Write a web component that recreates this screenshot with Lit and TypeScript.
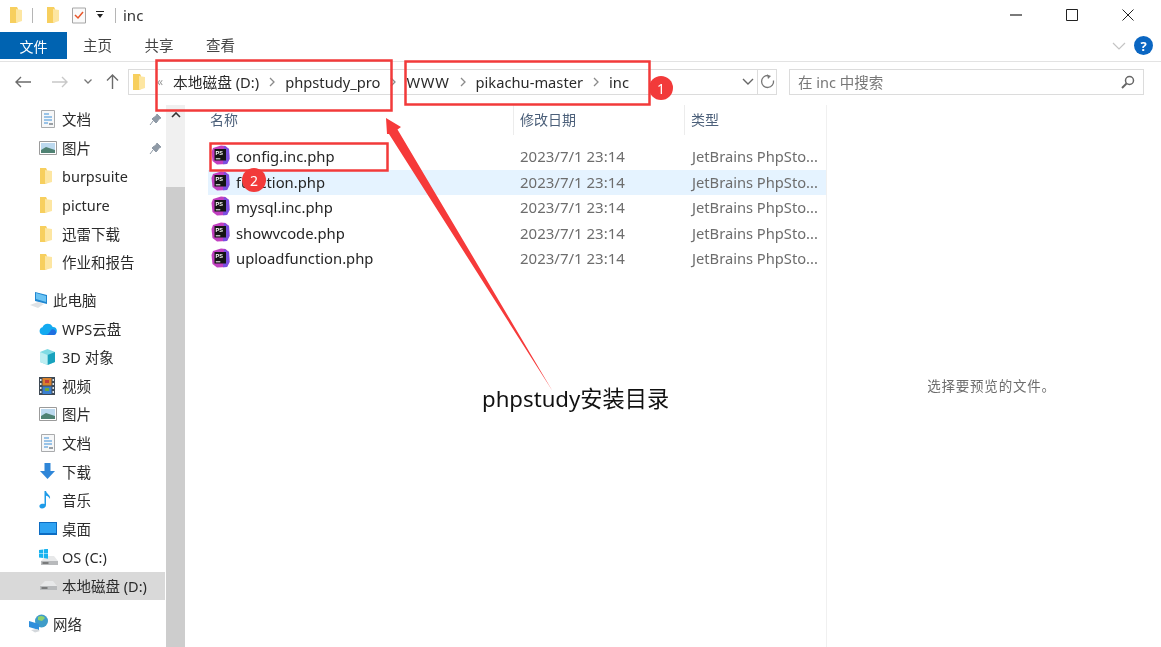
import { LitElement, html, css, svg } from "lit";
import { customElement } from "lit/decorators.js";

const folder = svg`<svg class="ic" width="16" height="18" viewBox="0 0 16 18"><path d="M1 1h7l1 2v12l-1 2H1z" fill="#f7cf5e"/><path d="M7 3l6 1v11l-6 2z" fill="#fde6a2"/></svg>`;
const sideFolder = svg`<svg width="16" height="18" viewBox="0 0 16 18"><path d="M1 1h6l1 2v12l-1 2H1z" fill="#f7cf5e"/><path d="M6 3l7 1v11l-7 2z" fill="#fde6a2"/></svg>`;
const doc = svg`<svg width="18" height="20" viewBox="0 0 18 20"><path d="M2.500 1.500h13v17h-13z" fill="#f6f7f8" stroke="#a9abad"/><path d="M5 5h5M5 8h8M5 11h8M5 14h4" stroke="#3d8fd6" fill="none"/><path d="M10 14h4v2h-4z" fill="#9aa0a5"/></svg>`;
const pic = svg`<svg width="18" height="14" viewBox="0 0 18 14"><path d="M.5.5h17v13H.5z" fill="#fff" stroke="#9b9b9b"/><path d="M2 2h14v10H2z" fill="#bcd9ef"/><path d="M2 9l5-3 9 3v3H2z" fill="#4f8273"/></svg>`;
const pin = svg`<svg width="13" height="13" viewBox="0 0 13 13"><path d="M8 1l4 4-2 1-2 3-1 1-4-4 1-1 3-2zM4 8l-3 4" fill="#8f9aa6" stroke="#8f9aa6"/></svg>`;
const pc = svg`<svg width="20" height="20" viewBox="0 0 20 20"><path d="M1 15l8-3 6 2-6 4z" fill="#dfe2e5"/><path d="M6 2l12 3v9l-12-3z" fill="#1f86d0"/><path d="M7 3l10 3v6L7 9z" fill="#6cc4f4"/></svg>`;
const cloud = svg`<svg width="18" height="14" viewBox="0 0 18 14"><path d="M4 13a4 4 0 0 1-.5-7.800A5.500 5.500 0 0 1 13.700 5 4 4 0 0 1 14 13z" fill="#13aaf0"/><path d="M6 13c3 0 5-3 6-5 2-1.700 5 0 5 2.500S15.500 13 14 13z" fill="#1f6fe0"/></svg>`;
const cube = svg`<svg width="17" height="18" viewBox="0 0 17 18"><path d="M8.500 1L16 4v10l-7.500 3L1 14V4z" fill="#7fdbe4"/><path d="M8.500 7L16 4v10l-7.500 3z" fill="#18a2bd"/><path d="M1 4l7.500 3v10L1 14z" fill="#bdeef2"/></svg>`;
const film = svg`<svg width="16" height="18" viewBox="0 0 16 18"><path d="M0 0h16v18H0z" fill="#3f4a55"/><path d="M3.500 1h9v7.500h-9z" fill="#d9812d"/><path d="M3.500 9.500h9V17h-9z" fill="#3a7fd0"/><path d="M6 3h4v3H6z" fill="#c13d3d"/><path d="M6 11h4v3H6z" fill="#6da542"/><path d="M1 2h1.500v2H1zM1 6h1.500v2H1zM1 10h1.500v2H1zM1 14h1.500v2H1zM13.500 2H15v2h-1.500zM13.500 6H15v2h-1.500zM13.500 10H15v2h-1.500zM13.500 14H15v2h-1.500z" fill="#dfe6ec"/></svg>`;
const down = svg`<svg width="17" height="17" viewBox="0 0 17 17"><path d="M5.500 0h6v8H16l-7.500 8L1 8h4.500z" fill="#2f86d8"/></svg>`;
const music = svg`<svg width="13" height="18" viewBox="0 0 13 18"><path d="M5.500 0h1.500c.5 3 5 4 4 8-.8-2-2.500-3-4-3.300V14c0 2-2 3.500-4 3.500S0 16 .5 14.500s3-2.200 5-1.500z" fill="#1e9be8"/></svg>`;
const desk = svg`<svg width="18" height="13" viewBox="0 0 18 13"><path d="M0 0h18v13H0z" fill="#0d6cc2"/><path d="M1 1h16v10H1z" fill="#2fa3f2"/></svg>`;
const disk = svg`<svg width="19" height="11" viewBox="0 0 19 11"><path d="M1 6l5-5h8l4 5z" fill="#e7e8e9"/><path d="M1 6h17v4H1z" fill="#b8babc"/><path d="M2.500 7.500h6v1h-6z" fill="#3a3a3a"/></svg>`;
const cDisk = svg`<svg width="20" height="17" viewBox="0 0 20 17"><path d="M2 12l5-5h8l4 5z" fill="#e7e8e9"/><path d="M2 12h17v4H2z" fill="#b8babc"/><path d="M3.500 13.500h6v1h-6z" fill="#3a3a3a"/><path d="M0 1l4-.6v4H0zM4.700.3L9-.3v4.700H4.700zM0 5h4v4L0 8.500zM4.700 5H9v4.700L4.700 9.100z" fill="#19b3ef"/></svg>`;
const net = svg`<svg width="20" height="19" viewBox="0 0 20 19"><circle cx="12.500" cy="7" r="6.500" fill="#3f9cc9"/><path d="M9 3c3-2 6-1 7 1l-3 3-4-1z" fill="#8ed16f"/><path d="M0 7l10 3v6L0 13z" fill="#2f8fdc"/><path d="M2 16l6-1 3 2-5 1.500z" fill="#d4d8dc"/></svg>`;
const ps = svg`<svg class="ps" width="19" height="20" viewBox="0 0 19 20"><path d="M2 3 10 .5 14.500 1 18 4l.5 10-2.500 5-10 .5L1.500 16 .5 7z" fill="#c13fc0"/><path d="M13 .7 18 4l.5 10-2.500 5-4 .3z" fill="#7a4fe0"/><path d="M3.500 4h11.500v11.500H3.500z" fill="#141414"/><text x="4.600" y="9.800" class="pst">PS</text><path d="M4.800 13.300h4.500v1H4.800z" fill="#fff"/></svg>`;

const quick = [
  [doc, "文档", true], [pic, "图片", true], [sideFolder, "burpsuite", false],
  [sideFolder, "picture", false], [sideFolder, "迅雷下载", false], [sideFolder, "作业和报告", false],
] as const;
const pcItems = [
  [cloud, "WPS云盘"], [cube, "3D 对象"], [film, "视频"], [pic, "图片"], [doc, "文档"],
  [down, "下载"], [music, "音乐"], [desk, "桌面"], [cDisk, "OS (C:)"],
] as const;
const files = ["config.inc.php", "function.php", "mysql.inc.php", "showvcode.php", "uploadfunction.php"];
const crumbs = ["本地磁盘 (D:)", "phpstudy_pro", "WWW", "pikachu-master", "inc"];

@customElement("app-root")
export class AppRoot extends LitElement {
  static styles = css`
    :host {
      display: block; position: relative; width: 1161px; height: 647px; overflow: hidden; background: #fff;
      font-family: "Noto Sans", "Noto Sans CJK SC", sans-serif; font-size: 14.5px; color: #2b2b2b;
      filter: blur(0.35px);
    }
    svg { display: block; flex: none; }
    .title { height: 30px; display: flex; align-items: center; padding-left: 9px; margin-bottom: 2px; }
    .title .sep { width: 1px; height: 15px; background: #b5b5b5; }
    .s1 { margin: 0 13px 0 7px; }
    .s2 { margin: 0 7px 0 11px; }
    .chk { margin-left: 9px; }
    .drop { margin-left: 9px; }
    .tname { font-size: 15px; color: #333; }
    .win { margin-left: auto; margin-right: 5px; display: flex; }
    .win div { width: 56px; height: 28px; display: grid; place-items: center; }
    .ribbon { height: 29px; display: flex; align-items: flex-start; border-bottom: 1px solid #e3e3e3; }
    .file { width: 67px; height: 27px; background: #0063b1; color: #fff; display: grid; place-items: center; font-size: 14px; }
    .tab { font-size: 14.500px; color: #444; line-height: 27px; margin-left: 16px; margin-right: 16.500px; }
    .rib-right { margin-left: auto; margin-right: 8px; display: flex; align-items: center; gap: 8px; height: 27px; }
    .help { width: 19px; height: 19px; border-radius: 50%; background: #0a66c2; color: #fff; font-size: 13px; font-weight: 700; display: grid; place-items: center; }
    .nav { height: 43px; display: flex; align-items: center; padding-bottom: 4px; box-sizing: border-box; }
    .navb { display: flex; align-items: center; width: 128px; flex: none; padding-left: 15px; box-sizing: border-box; }
    .address { width: 629px; height: 26px; box-sizing: border-box; border: 1px solid #dcdcdc; border-right: 0; display: flex; align-items: center; padding-left: 3px; flex: none; }
    .address .ic { margin-right: 9px; }
    .dbl { color: #9a9a9a; font-size: 12px; margin-right: 10px; }
    .crumb { color: #2b2b2b; white-space: nowrap; font-size: 14.700px; }
    .crumb.w2 { letter-spacing: 0.700px; }
    .gt { margin: 0 10px; flex: none; }
    .addr-drop { margin-left: auto; margin-right: 3px; }
    .refresh { width: 20px; height: 26px; box-sizing: border-box; border: 1px solid #dcdcdc; display: grid; place-items: center; flex: none; }
    .search { margin-left: 12px; width: 355px; height: 26px; box-sizing: border-box; border: 1px solid #dcdcdc; display: flex; align-items: center; padding: 0 8px; color: #777; font-size: 14.500px; flex: none; justify-content: space-between; }
    .main { display: flex; height: 542px; }
    .side { width: 166px; flex: none; display: flex; flex-direction: column; }
    .row { height: 28.600px; display: flex; align-items: center; position: relative; white-space: nowrap; flex: none; }
    .row .icon { width: 62px; padding-left: 39px; box-sizing: border-box; flex: none; display: flex; justify-content: flex-start; }
    .row.top .icon { width: 53px; padding-left: 29px; }
    .row .txt { position: relative; top: -0.500px; }
    .row.sel { background: #d9d9d9; margin-right: 1px; }
    .row .pin { position: absolute; left: 149px; top: 8px; }
    .gap { height: 9.100px; flex: none; }
    .scroll { width: 19px; flex: none; display: flex; flex-direction: column; }
    .sup { height: 82px; background: #f0f0f0; display: flex; justify-content: center; padding-top: 7px; box-sizing: border-box; }
    .thumb { flex: 1; background: #cdcdcd; }
    .list { width: 642px; flex: none; border-right: 1px solid #f0f0f0; padding-left: 23px; box-sizing: border-box; }
    .head { display: grid; grid-template-columns: 305px 171px 1fr; height: 30px; align-items: center; color: #4c607a; font-size: 14px; }
    .head div { height: 30px; line-height: 30px; padding-left: 6px; border-left: 1px solid #ececec; }
    .head div:first-child { padding-left: 2px; border-left: 0; }
    .rows { padding-top: 9px; }
    .frow { display: grid; grid-template-columns: 305px 171px 1fr; height: 25.600px; line-height: 25.600px; align-items: start; color: #6d6d6d; white-space: nowrap; font-size: 14.700px; }
    .frow.hot { background: #e5f3ff; }
    .frow .n { display: flex; align-items: center; gap: 6px; color: #262626; padding-left: 3px; font-size: 14.800px; }
    .frow .d { padding-left: 7px; font-size: 15px; }
    .frow .t { padding-left: 8px; }
    .ps { margin-top: -3px; }
    .pst { font: 700 5.500px "Liberation Sans", sans-serif; fill: #fff; }
    .preview { flex: 1; display: flex; justify-content: center; padding-top: 270px; padding-right: 5px; box-sizing: border-box; color: #6d6d6d; font-size: 13.500px; letter-spacing: 0.800px; }
    .anno { position: absolute; left: 0; top: 0; pointer-events: none; }
    .label { position: absolute; left: 482px; top: 381px; font-size: 22.200px; line-height: 36px; color: #111; white-space: nowrap; }
    .badge { position: absolute; width: 24px; height: 24px; border-radius: 50%; background: #f23a3a; color: #fff; display: grid; place-items: center; font-size: 14px; }
    .b1 { left: 649px; top: 76px; }
    .b2 { left: 242px; top: 168px; }
  `;

  private chevron() {
    return svg`<svg class="gt" width="6" height="10" viewBox="0 0 6 10"><path d="M1 1l4 4-4 4" fill="none" stroke="#8a8a8a" stroke-width="1.300"/></svg>`;
  }

  render() {
    return html`
      <div class="title">
        ${folder}<div class="sep s1"></div>${folder}
        <svg class="chk" width="16" height="17" viewBox="0 0 16 17"><path d="M1.500 1h13v15h-13z" fill="#fafafa" stroke="#a6a6a6"/><path d="M4 8l3 3 5-6" fill="none" stroke="#e8562a" stroke-width="1.500"/></svg>
        <svg class="drop" width="8" height="8" viewBox="0 0 8 8"><path d="M0 0h8v1H0z" fill="#222"/><path d="M1 3h6L4 7z" fill="#222"/></svg>
        <div class="sep s2"></div><span class="tname">inc</span>
        <div class="win">
          <div><svg width="12" height="2" viewBox="0 0 12 2"><path d="M0 1h12" stroke="#222" stroke-width="1.200"/></svg></div>
          <div><svg width="12" height="12" viewBox="0 0 12 12"><path d="M.5.5h11v11H.5z" fill="none" stroke="#222"/></svg></div>
          <div><svg width="12" height="12" viewBox="0 0 12 12"><path d="M.5.500l11 11M11.500.500l-11 11" fill="none" stroke="#222"/></svg></div>
        </div>
      </div>
      <div class="ribbon">
        <div class="file">文件</div>
        <span class="tab">主页</span><span class="tab">共享</span><span class="tab">查看</span>
        <div class="rib-right">
          <svg width="14" height="8" viewBox="0 0 14 8"><path d="M1 1l6 6 6-6" fill="none" stroke="#c4c4c4" stroke-width="1.200"/></svg>
          <div class="help">?</div>
        </div>
      </div>
      <div class="nav">
        <div class="navb">
          <svg width="16" height="12" viewBox="0 0 16 12"><path d="M16 6H1M6 1L1 6l5 5" fill="none" stroke="#6b6b6b" stroke-width="1.400"/></svg>
          <svg style="margin-left:21px" width="16" height="12" viewBox="0 0 16 12"><path d="M0 6h15M10 1l5 5-5 5" fill="none" stroke="#c8c8c8" stroke-width="1.400"/></svg>
          <svg style="margin-left:16px" width="8" height="5" viewBox="0 0 8 5"><path d="M.5.500L4 4 7.500.500" fill="none" stroke="#777" stroke-width="1.300"/></svg>
          <svg style="margin-left:14px" width="13" height="15" viewBox="0 0 13 15"><path d="M6.500 15V1M1 6.500l5.500-5.500 5.500 5.500" fill="none" stroke="#6b6b6b" stroke-width="1.400"/></svg>
        </div>
        <div class="address">
          ${folder}<span class="dbl">«</span>
          ${crumbs.map((c, i) => html`<span class="crumb ${i === 2 ? "w2" : ""}">${c}</span>${i < crumbs.length - 1 ? this.chevron() : ""}`)}
          <svg class="addr-drop" width="12" height="7" viewBox="0 0 12 7"><path d="M1 1l5 5 5-5" fill="none" stroke="#666" stroke-width="1.400"/></svg>
        </div>
        <div class="refresh"><svg width="15" height="15" viewBox="0 0 15 15"><path d="M8 1.500a6 6 0 1 0 5.500 5" fill="none" stroke="#777" stroke-width="1.300"/><path d="M7 .500L11 2 8 5z" fill="#777"/></svg></div>
        <div class="search"><span>在 inc 中搜索</span>
          <svg width="14" height="14" viewBox="0 0 14 14"><circle cx="8.500" cy="5.500" r="4" fill="none" stroke="#666" stroke-width="1.500"/><path d="M5.500 8.500L1 13" stroke="#666" stroke-width="2"/></svg></div>
      </div>
      <div class="main">
        <div class="side">
          ${quick.map(([ic, t, p]) => html`<div class="row"><div class="icon">${ic}</div><span class="txt">${t}</span>${p ? html`<div class="pin">${pin}</div>` : ""}</div>`)}
          <div class="gap"></div>
          <div class="row top"><div class="icon">${pc}</div><span class="txt">此电脑</span></div>
          ${pcItems.map(([ic, t]) => html`<div class="row"><div class="icon">${ic}</div><span class="txt">${t}</span></div>`)}
          <div class="row sel"><div class="icon">${disk}</div><span class="txt">本地磁盘 (D:)</span></div>
          <div class="gap"></div>
          <div class="row top"><div class="icon">${net}</div><span class="txt">网络</span></div>
        </div>
        <div class="scroll">
          <div class="sup"><svg width="10" height="6" viewBox="0 0 10 6"><path d="M1 5l4-4 4 4" fill="none" stroke="#333" stroke-width="1.600"/></svg></div>
          <div class="thumb"></div>
        </div>
        <div class="list">
          <div class="head"><div>名称</div><div>修改日期</div><div>类型</div></div>
          <div class="rows">
            ${files.map((f, i) => html`<div class="frow ${i === 1 ? "hot" : ""}"><div class="n">${ps}${f}</div><div class="d">2023/7/1 23:14</div><div class="t">JetBrains PhpSto...</div></div>`)}
          </div>
        </div>
        <div class="preview">选择要预览的文件。</div>
      </div>
      <svg class="anno" width="1161" height="647" viewBox="0 0 1161 647">
        <g fill="none" stroke="#f23a3a" stroke-width="2.500">
          <rect x="156.500" y="60.500" width="235" height="50"/>
          <rect x="405.500" y="61.500" width="244" height="43"/>
          <rect x="210.500" y="143.500" width="177" height="27"/>
        </g>
        <path d="M386 118L401 127 397.500 129.500 552.500 391 389 134 387 134z" fill="#f63a3a"/>
      </svg>
      <div class="label">phpstudy安装目录</div>
      <div class="badge b1">1</div>
      <div class="badge b2">2</div>
    `;
  }
}
